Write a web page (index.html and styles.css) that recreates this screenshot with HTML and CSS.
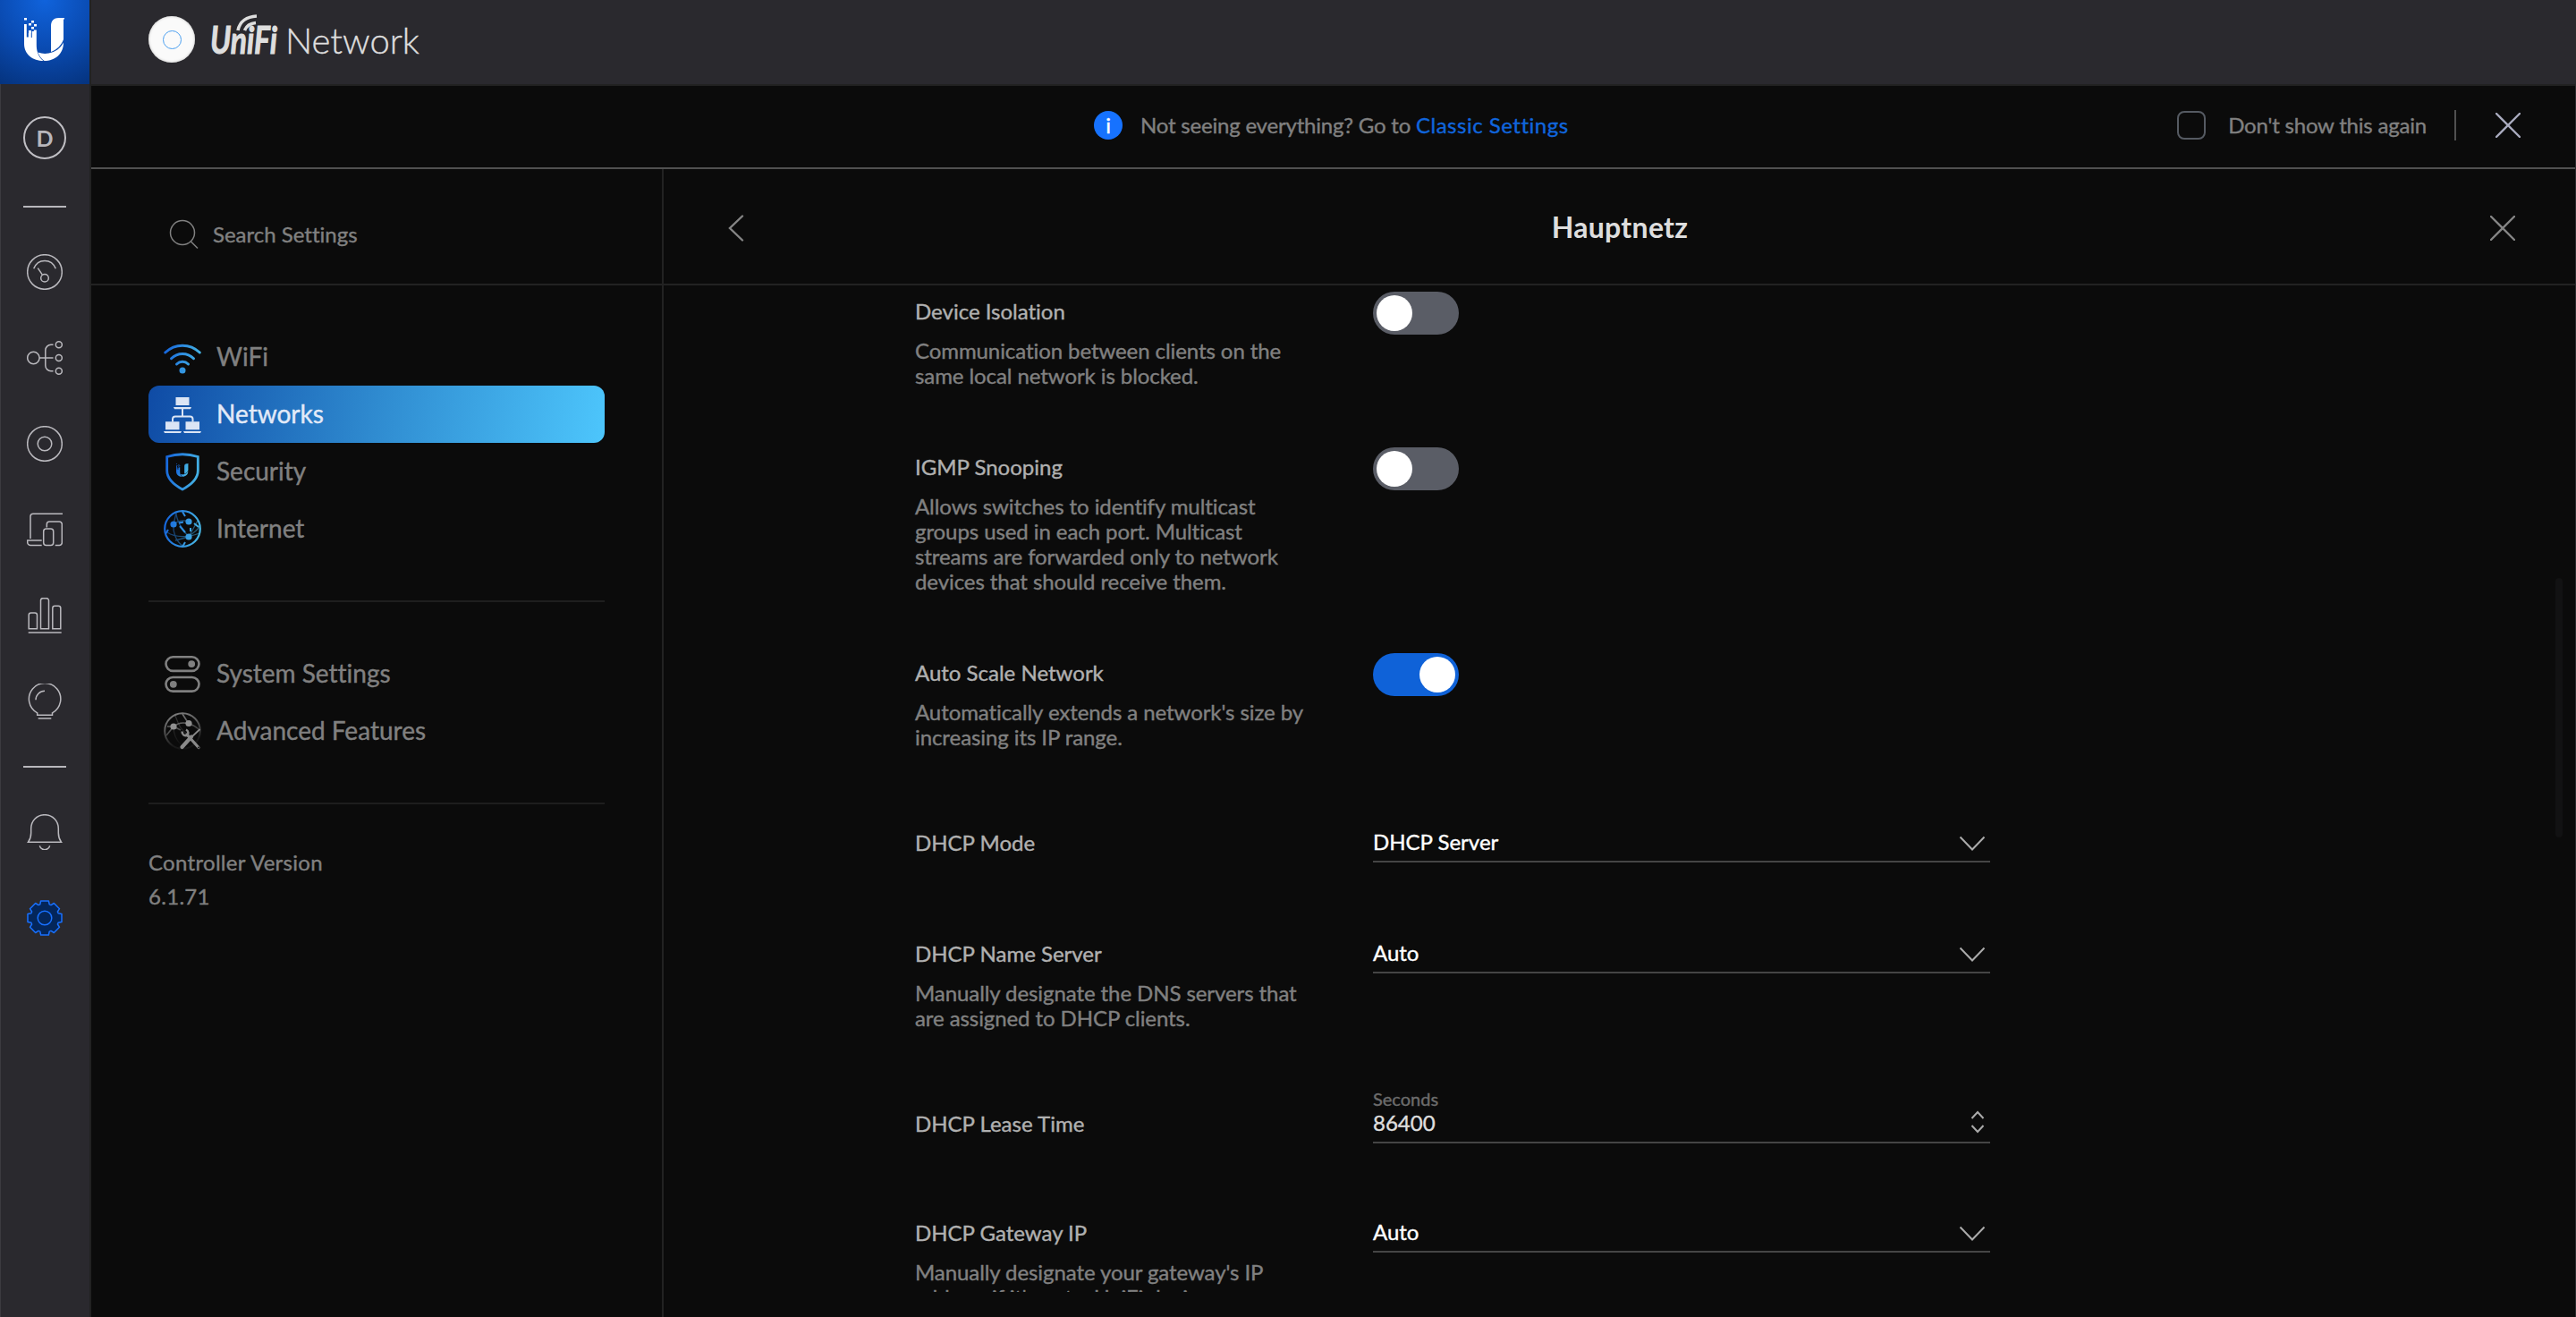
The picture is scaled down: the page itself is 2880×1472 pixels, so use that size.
FILE: index.html
```html
<!DOCTYPE html>
<html lang="en">
<head>
<meta charset="utf-8">
<title>UniFi Network</title>
<link rel="stylesheet" href="styles.css">
</head>
<body>
<svg class="defs" aria-hidden="true">
  <defs>
    <linearGradient id="blue" gradientUnits="userSpaceOnUse" x1="0" y1="18" x2="42" y2="26">
      <stop offset="0" stop-color="#1565dc"/>
      <stop offset="1" stop-color="#49b9e4"/>
    </linearGradient>
    <linearGradient id="fade" gradientUnits="userSpaceOnUse" x1="14" y1="0" x2="26" y2="42">
      <stop offset="0" stop-color="#7e7e7e"/>
      <stop offset="0.4" stop-color="#555"/>
      <stop offset="0.8" stop-color="#1a1a1a"/>
      <stop offset="1" stop-color="#141414"/>
    </linearGradient>
    <symbol id="u-mark" viewBox="0 0 46 48">
      <path d="M0 0h3v2.5H0zM8 3h3v2.5H8zM5 6h3v2.500H5zM11 7h3v2.500h-3zM8 10h3v2.500H8zM5 14h3v3H5z"/>
      <path d="M0 7h2.800v14.500h2V17h3v5h1V15h2v-1.500h3V30c0 3 .4 6 1.200 8.500 1.200 4 3.500 7.500 6.500 9.500C10 48 0 41 0 29z"/>
      <path d="M30 9c0-6 3.500-9 8.500-9H45v1.500h-1V24c-2.500 7-7.500 11.500-14 14z"/>
      <path d="M15.500 38.500c4 1.500 8 1.700 12 1C35 38 40.500 34 44 27.500 44 40 35 48 22.500 48c-3.500-2.500-5.800-5.500-7-9.500z"/>
    </symbol>
  </defs>
</svg>

<div class="app">
  <nav class="rail">
    <a class="brand"><svg width="46" height="48"><use href="#u-mark"/></svg></a>
    <span class="site">D</span>
    <hr class="rail-line">
    <div class="rail-group">
      <svg class="ri" viewBox="0 0 40 40"><circle cx="20" cy="20" r="19.300"/><path d="M7.700 16.300C10 10.500 14.500 7.500 20 7.500s10 3 12.300 8.800M12.300 15.700l4.900 7.200"/><circle cx="20" cy="26.700" r="4.300"/></svg>
      <svg class="ri" viewBox="0 0 40 40"><circle cx="7.400" cy="20" r="6.700"/><path d="M14 20h15.500M29.500 5.300H27a6.200 6.200 0 0 0-6.200 6.200v17a6.200 6.200 0 0 0 6.200 6.200h2.500"/><circle cx="35.800" cy="5.300" r="3.500"/><circle cx="35.800" cy="20" r="3.500"/><circle cx="35.800" cy="34.700" r="3.500"/></svg>
      <svg class="ri" viewBox="0 0 40 40"><circle cx="20" cy="20" r="19.300"/><circle cx="20" cy="20" r="7.800"/></svg>
      <svg class="ri" viewBox="0 0 40 40"><path d="M40 2.300H7a3 3 0 0 0-3 3V30M16.700 32H.7v2a3.500 3.500 0 0 0 3.500 3.500h12.500M22.300 17.500V14a3 3 0 0 1 3-3h11a3 3 0 0 1 3 3v20.500a3 3 0 0 1-3 3h-4.600"/><rect x="18.700" y="19" width="11" height="18.600" rx="3"/></svg>
      <svg class="ri" viewBox="0 0 40 40"><path d="M1.700 39h37M2.200 34.700V19.500a2.500 2.500 0 0 1 2.500-2.500H9a2.500 2.500 0 0 1 2.500 2.500v15.200zM15.500 34.700V3.200A2.500 2.500 0 0 1 18 .7h4a2.500 2.500 0 0 1 2.500 2.500v31.500zM28.800 34.700V11.800a2.500 2.500 0 0 1 2.500-2.500h4a2.500 2.500 0 0 1 2.500 2.500v22.900z"/></svg>
      <svg class="ri" viewBox="0 0 40 40"><path d="M11.700 35.300v-2.500A17.700 17.700 0 1 1 28.500 32.800v2.500zM12.700 39h14.600M10 18.300a10 10 0 0 1 10-10"/></svg>
    </div>
    <hr class="rail-line">
    <div class="rail-group">
      <svg class="ri" viewBox="0 0 40 40"><path d="M20 .7C11 .7 4.700 7.500 4.700 16v5c0 4-1.200 7.500-3.200 10.300h37c-2-2.800-3.200-6.300-3.200-10.300v-5C35.300 7.500 29 .7 20 .7zM14.300 35.300a5.900 5.900 0 0 0 11.400 0"/></svg>
      <svg class="ri gear" viewBox="0 0 40 40"><path d="M15.600 1h8.800l.8 3.900 1.800.7 3.300-2.100 6.200 6.200-2.100 3.300.7 1.800 3.900.8v8.800l-3.900.8-.7 1.800 2.100 3.300-6.200 6.200-3.300-2.100-1.800.7-.8 3.900h-8.800l-.8-3.900-1.800-.7-3.300 2.100-6.200-6.200 2.100-3.300-.7-1.800L1 24.400v-8.800l3.900-.8.7-1.800-2.100-3.300 6.200-6.200L13 5.600l1.800-.7z"/><circle cx="20" cy="20" r="7.800"/></svg>
    </div>
  </nav>

  <div class="page">
    <header class="topbar">
      <span class="ap"><i></i></span>
      <svg class="unifi" viewBox="0 0 76 50" width="76" height="50">
        <text x="0" y="45" textLength="75" lengthAdjust="spacingAndGlyphs">UniFi</text>
        <path d="M31 19C33 9 41 3.500 52 3M38.500 19C40.500 14 45 11 51 10.500"/>
      </svg>
      <span class="product">Network</span>
    </header>

    <div class="banner">
      <div class="notice">
        <span class="info">i</span>
        <p>Not seeing everything? Go to <a>Classic Settings</a></p>
      </div>
      <div class="dismiss">
        <span class="box"></span>
        <span class="again">Don't show this again</span>
        <span class="bar"></span>
        <svg class="x1" viewBox="0 0 28 28" width="28" height="28"><path d="M1 1l26 26M27 1L1 27"/></svg>
      </div>
    </div>

    <div class="columns">
      <aside class="side">
        <div class="search">
          <svg viewBox="0 0 34 34" width="34" height="34"><circle cx="15" cy="15" r="13.500"/><path d="M24.500 25l7.500 7.500"/></svg>
          <span>Search Settings</span>
        </div>
        <div class="menu">
          <a class="item">
            <svg viewBox="0 0 42 42"><g class="b" stroke-width="3" stroke-linecap="round"><path d="M1.700 16c11-10.500 27.600-10.500 38.600 0M8.500 22.700c7-7 18-7 25 0M14.500 29c3.700-3.600 9.300-3.600 13 0"/></g><circle class="bf" cx="21" cy="36" r="3.500"/></svg>
            <span>WiFi</span></a>
          <a class="item active">
            <svg viewBox="0 0 42 42"><path fill="#dbe5f5" d="M13.500 2h15v9h-15zM2 29.300h15.500v9H2zM24.500 29.300H40v9H24.500zM11 13h20l-1 2.200H12zM0 40h20l-1 2H1zM22 40h20l-1 2H23z"/><path fill="none" stroke="#dbe5f5" stroke-width="2" d="M21 15v8.500M10 29.500v-3a3 3 0 0 1 3-3h16.500a3 3 0 0 1 3 3v3"/></svg>
            <span>Networks</span></a>
          <a class="item">
            <svg viewBox="0 0 42 42"><path class="b" stroke-width="2.800" d="M3.700 4.500c11-3.500 23.600-3.500 34.600 0V20c0 9-8 16-17.300 21C11.700 36 3.700 29 3.700 20z"/><svg class="bf" x="14" y="12" width="14" height="15"><use href="#u-mark"/></svg></svg>
            <span>Security</span></a>
          <a class="item">
            <svg viewBox="0 0 42 42"><g class="b" stroke-width="1.300" opacity=".5"><path d="M11 16c5-4 11-5 17-3M4 25c9 6 24 6 36 1M11 16c-1 9 3 19 10 24M14 3c0 8 7 20 14 27M28 30c5-6 10-6 12-12M14 3l-3 13M38 12L28 30M13 34l15-4"/></g><g class="b" stroke-width="2"><circle cx="21" cy="21" r="19.800" stroke-width="2.200"/><path d="M18 18l6 7M17 14.500l5-1M30 20v4M21 2l3 5M34 15l5 4M2 27l3-5M21 41l3-5"/></g><g class="bf"><circle cx="11" cy="16" r="3.600"/><circle cx="28" cy="13" r="3.600"/><circle cx="28" cy="30" r="3.600"/></g></svg>
            <span>Internet</span></a>
        </div>
        <hr>
        <div class="menu">
          <a class="item">
            <svg viewBox="0 0 42 42"><g fill="none" stroke="#808080" stroke-width="2.600"><rect x="2.500" y="2.300" width="37" height="15.600" rx="7.800"/><rect x="2.500" y="25" width="37" height="15.600" rx="7.800"/></g><circle cx="31.200" cy="10.100" r="3.900" fill="#808080"/><circle cx="10.800" cy="32.800" r="3.900" fill="#808080"/></svg>
            <span>System Settings</span></a>
          <a class="item">
            <svg viewBox="0 0 42 42"><g fill="none" stroke="url(#fade)"><circle cx="21" cy="21" r="19.800" stroke-width="2"/><path stroke-width="1.600" d="M11 16c5-4 11-5 17-3M28 13l-7-11M11 16H4M11 16l-8 10M28 13c4 1 8 3 11 6M11 16l8 4"/><path stroke-width="1.200" opacity=".4" d="M13 4c4 10 5 15 15 22M11 16c0 8 3 15 8 20"/></g><g fill="#909090"><circle cx="11" cy="16" r="3.600"/><circle cx="28" cy="12.500" r="3.600"/></g><path fill="none" stroke="#8a8a8a" stroke-width="4.200" stroke-linecap="round" d="M20.500 39L31 27.500"/><path fill="none" stroke="#8a8a8a" stroke-width="1.800" d="M31 28l9.500-9"/><path fill="none" stroke="#8a8a8a" stroke-width="3.200" stroke-linecap="round" d="M26 25L39 39.500"/><path fill="none" stroke="#8a8a8a" stroke-width="2.500" d="M20.500 21.500c0 4 3 5 5.500 4.500 2-1.500 2-5-1-6.500"/><circle cx="39" cy="39.500" r=".9" fill="#0b0b0b"/></svg>
            <span>Advanced Features</span></a>
        </div>
        <hr>
        <p class="version">Controller Version<br>6.1.71</p>
      </aside>

      <main class="panel">
        <div class="panel-head">
          <svg class="back" viewBox="0 0 18 30" width="18" height="30"><path d="M16 1.500L2 15l14 13.500"/></svg>
          <h1>Hauptnetz</h1>
          <svg class="x2" viewBox="0 0 28 28" width="28" height="28"><path d="M1 1l26 26M27 1L1 27"/></svg>
        </div>
        <div class="form">
          <section class="row">
            <div class="label"><h2>Device Isolation</h2><p>Communication between clients on the<br>same local network is blocked.</p></div>
            <span class="toggle"><i></i></span>
          </section>
          <section class="row">
            <div class="label"><h2>IGMP Snooping</h2><p>Allows switches to identify multicast<br>groups used in each port. Multicast<br>streams are forwarded only to network<br>devices that should receive them.</p></div>
            <span class="toggle"><i></i></span>
          </section>
          <section class="row">
            <div class="label"><h2>Auto Scale Network</h2><p>Automatically extends a network's size by<br>increasing its IP range.</p></div>
            <span class="toggle on"><i></i></span>
          </section>
          <section class="row field mode">
            <div class="label"><h2>DHCP Mode</h2></div>
            <div class="select"><span>DHCP Server</span><svg class="chev" viewBox="0 0 30 18" width="30" height="18"><path d="M1.500 1.500L15 15.500 28.500 1.500"/></svg></div>
          </section>
          <section class="row field">
            <div class="label"><h2>DHCP Name Server</h2><p>Manually designate the DNS servers that<br>are assigned to DHCP clients.</p></div>
            <div class="select"><span>Auto</span><svg class="chev" viewBox="0 0 30 18" width="30" height="18"><path d="M1.500 1.500L15 15.500 28.500 1.500"/></svg></div>
          </section>
          <section class="row field lease">
            <div class="label"><h2>DHCP Lease Time</h2></div>
            <div class="select number"><div><small>Seconds</small><span>86400</span></div><svg class="spin" viewBox="0 0 16 26" width="16" height="26"><path d="M1.500 9L8 2l6.500 7M1.500 17L8 24l6.500-7"/></svg></div>
          </section>
          <section class="row field">
            <div class="label"><h2>DHCP Gateway IP</h2><p>Manually designate your gateway's IP<br>address if it's not a UniFi device.</p></div>
            <div class="select"><span>Auto</span><svg class="chev" viewBox="0 0 30 18" width="30" height="18"><path d="M1.500 1.500L15 15.500 28.500 1.500"/></svg></div>
          </section>
        </div>
        <span class="scrollbar"></span>
      </main>
    </div>
  </div>
</div>
</body>
</html>
```
FILE: styles.css
```css
* { box-sizing: border-box; margin: 0; padding: 0; }

html, body { height: 100%; overflow: hidden; }

body {
  background: #0b0b0b;
  color: #808080;
  font-family: Lato, "Open Sans", sans-serif;
  font-size: 24px;
  line-height: 28px;
  font-variant-ligatures: none;
  -webkit-text-stroke: 0.4px currentColor;
}

.defs { position: absolute; width: 0; height: 0; }

.app { display: flex; width: 2880px; height: 1472px; border-right: 1px solid #2b2b2d; }

/* Icon rail */
.rail {
  flex: none;
  display: flex;
  flex-direction: column;
  align-items: center;
  width: 102px;
  background: #2a292e;
  border-right: 2px solid #222;
  box-shadow: inset 1px 0 #3c3b40;
}
.brand {
  display: flex;
  align-items: center;
  justify-content: center;
  width: 100px;
  height: 94px;
  padding-bottom: 6px;
  background: radial-gradient(circle at 50% 0, #1063dc 0, #0a4bb2 50%, #05337e 100%);
  fill: #fff;
}
.site {
  display: flex;
  align-items: center;
  justify-content: center;
  width: 48px;
  height: 48px;
  margin: 36px 0 52px;
  padding-bottom: 1px;
  border: 2px solid #c0bfc4;
  border-radius: 50%;
  color: #b8b7bc;
  font-weight: 700;
  font-size: 25px;
  -webkit-text-stroke: 0;
}
.rail-line { width: 48px; height: 2px; border: 0; background: #b8b7bc; }
.rail-group { display: flex; flex-direction: column; gap: 56px; padding: 52px 0; }
.ri { width: 40px; height: 40px; fill: none; stroke: #bab9be; stroke-width: 1.500; }
.gear { fill: #04265a; stroke: #1870ff; stroke-linejoin: round; }

/* Top bar */
.page { flex: 1; display: flex; flex-direction: column; min-width: 0; }
.topbar {
  flex: none;
  display: flex;
  align-items: flex-start;
  height: 96px;
  padding-left: 64px;
  background: #2a292e;
  border-bottom: 2px solid #222;
}
.ap {
  display: flex;
  align-items: center;
  justify-content: center;
  width: 52px;
  height: 52px;
  margin-top: 18px;
  border-radius: 50%;
  background: #fafafa;
  box-shadow: inset 0 0 3px #bbb;
}
.ap i { width: 21px; height: 21px; border: 1.500px solid #4a9ff0; border-radius: 50%; }
.unifi { margin: 15px 0 0 17px; overflow: visible; }
.unifi text { font: italic 700 42px Lato, sans-serif; fill: #dedede; stroke: #dedede; stroke-width: 1; -webkit-text-stroke: 0; }
.unifi path { fill: none; stroke: #dedede; stroke-width: 3.600; }
.product { margin: 21px 0 0 8px; color: #dedede; font-size: 40px; line-height: 48px; font-weight: 300; }

/* Banner */
.banner {
  flex: none;
  display: grid;
  grid-template-columns: 1fr auto;
  align-items: center;
  height: 93px;
  padding: 0 61px 3px 0;
  border-bottom: 2px solid #505050;
  letter-spacing: -0.2px;
}
.notice { display: flex; align-items: center; gap: 20px; padding-left: 1121px; white-space: nowrap; }
.notice a { color: #1065dc; letter-spacing: 0.500px; }
.info {
  width: 32px;
  height: 32px;
  border-radius: 50%;
  background: #1672ff;
  color: #fff;
  text-align: center;
  line-height: 31px;
}
.dismiss { display: flex; align-items: center; }
.box { width: 32px; height: 32px; border: 2px solid #555a62; border-radius: 8px; }
.again { margin: 0 31px 0 25px; }
.bar { width: 2px; height: 34px; margin-right: 44px; background: #505050; }
.x1, .x2, .back { fill: none; stroke-width: 2.400; stroke: #a9abbe; stroke-linecap: round; }
.x2, .back { stroke: #858585; }

.columns { flex: 1; display: flex; min-height: 0; }

/* Settings menu */
.side { flex: none; width: 640px; border-right: 2px solid #222; }
.search {
  display: flex;
  align-items: center;
  height: 130px;
  padding: 17px 0 0 87px;
  gap: 15px;
  border-bottom: 2px solid #222;
}
.search svg { fill: none; stroke: #808080; stroke-width: 1.500; }
.menu { padding: 48px 64px; }
.item { display: flex; align-items: center; gap: 17px; height: 64px; padding-left: 17px; border-radius: 12px; font-size: 28px; }
.item > svg { width: 42px; height: 42px; overflow: visible; }
.item span { padding-bottom: 2px; }
.item.active { background: linear-gradient(100deg, #0f4ba5 0%, #2f8bd0 50%, #4dc6fc 100%); color: #e2eaf8; }
.b { fill: none; stroke: url(#blue); }
.bf { fill: url(#blue); }
.side hr { height: 2px; margin: 0 64px; border: 0; background: #1e1e1e; }
.version { margin: 46px 64px 0; line-height: 38px; letter-spacing: 0.300px; }

/* Detail panel */
.panel { position: relative; flex: 1; display: flex; flex-direction: column; min-width: 0; }
.panel-head {
  flex: none;
  display: flex;
  align-items: center;
  justify-content: space-between;
  height: 130px;
  padding: 3px 67px 0 72px;
  border-bottom: 2px solid #222;
}
h1 { margin: 0 0 2px 6px; color: #dedede; font-size: 32px; line-height: 40px; font-weight: 700; letter-spacing: 0.300px; -webkit-text-stroke: 0; }
.form { height: 1125px; padding: 7px 0 0 281px; overflow: hidden; }
.row { display: grid; grid-template-columns: 512px 690px; padding-bottom: 66px; }
.label { padding-top: 8px; white-space: nowrap; }
.label p { margin-top: 16px; letter-spacing: -0.080px; }
h2 { color: #b0b0b0; font-size: 24px; font-weight: 400; }
.toggle { width: 96px; height: 48px; padding: 4px; border-radius: 24px; background: #5a5d66; }
.toggle i { display: block; width: 40px; height: 40px; border-radius: 50%; background: #fff; }
.toggle.on { background: #0f62d8; }
.toggle.on i { margin-left: 48px; }
.field .label { padding-top: 24px; }
.mode { padding-bottom: 64px; }
.lease { padding-bottom: 62px; }
.select {
  display: flex;
  align-items: flex-end;
  justify-content: space-between;
  height: 60px;
  padding: 0 5px 7px 0;
  border-bottom: 2px solid #454545;
  color: #fff;
}
.select span { display: block; }
.select svg { margin-bottom: 3px; fill: none; stroke: #ababab; stroke-width: 2; }
.select .spin { margin-bottom: 2px; }
.number { color: #dedede; padding-right: 6px; }
.number small { display: block; color: #6c6c6c; font-size: 20px; line-height: 26px; }
.scrollbar { position: absolute; right: 14px; top: 457px; width: 8px; height: 290px; border-radius: 4px; background: #121213; }
```
